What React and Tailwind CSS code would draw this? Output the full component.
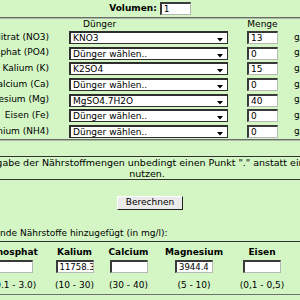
const rows = [
  { label: 'Nitrat (NO3)', duenger: 'KNO3', menge: '13' },
  { label: 'Phosphat (PO4)', duenger: 'Dünger wählen..', menge: '0' },
  { label: 'Kalium (K)', duenger: 'K2SO4', menge: '15' },
  { label: 'Calcium (Ca)', duenger: 'Dünger wählen..', menge: '0' },
  { label: 'Magnesium (Mg)', duenger: 'MgSO4.7H2O', menge: '40' },
  { label: 'Eisen (Fe)', duenger: 'Dünger wählen..', menge: '0' },
  { label: 'Ammonium (NH4)', duenger: 'Dünger wählen..', menge: '0' },
];

const results = [
  { name: 'Phosphat', value: '', range: '(0.1 - 3.0)', w: 'w-[60px]' },
  { name: 'Kalium', value: '11758.372', range: '(10 - 30)', w: 'w-[61px]' },
  { name: 'Calcium', value: '', range: '(30 - 40)', w: 'w-[47px]' },
  { name: 'Magnesium', value: '3944.4', range: '(5 - 10)', w: 'w-[84px]' },
  { name: 'Eisen', value: '', range: '(0,1 - 0,5)', w: 'w-[52px]' },
];

function TextBox({ value, className = '' }) {
  return (
    <div
      className={`h-[13px] bg-white border-t-2 border-l-2 border-r border-b border-t-[#3a3a3a] border-l-[#3a3a3a] border-r-[#b8b8b8] border-b-[#b8b8b8] pl-[2px] leading-[10px] overflow-hidden whitespace-nowrap ${className}`}
    >
      {value}
    </div>
  );
}

function Select({ value }) {
  return (
    <div className="w-[159px] h-[13px] bg-white border-t-2 border-l-2 border-r border-b border-[#2e2e2e] flex items-center pl-[2px] pr-[4px]">
      <span className="flex-1 leading-[10px] whitespace-nowrap">{value}</span>
      <svg width="6" height="4" viewBox="0 0 6 4" className="mt-[4px]">
        <path d="M0 0h6L3 3.5z" fill="#000" />
      </svg>
    </div>
  );
}

function Rule() {
  return <div className="border-t border-b border-t-[#6b6b6b] border-b-[#a9b9a2]" />;
}

export default function App() {
  return (
    <div className="w-[300px] h-[300px] overflow-hidden bg-[#d3f6c4] text-black text-[9px] font-['DejaVu_Sans',Verdana,sans-serif]">
      <div className="w-[420px] ml-[-60px]">
        {/* Volumen */}
        <div className="h-[17px] pt-[2px] flex justify-center items-start gap-[3px]">
          <span className="font-bold leading-[13px]">Volumen:</span>
          <TextBox value="1" className="w-[31px]" />
        </div>
        <Rule />

        {/* Dünger table */}
        <div className="flex h-[12px] items-center">
          <div className="w-[143px]" />
          <span className="w-[164px]">Dünger</span>
          <span className="w-[31px] text-center">Menge</span>
        </div>
        <div className="flex flex-col gap-[2.67px]">
          {rows.map((r) => (
            <div key={r.label} className="flex items-center h-[13px]">
              <span className="w-[109px] text-right whitespace-nowrap">{r.label}</span>
              <div className="ml-[20px]">
                <Select value={r.duenger} />
              </div>
              <TextBox value={r.menge} className="w-[31px] ml-[19px]" />
              <span className="ml-[16px]">g/l</span>
            </div>
          ))}
        </div>
        <div className="mt-[1px]">
          <Rule />
        </div>

        {/* Hinweis */}
        <div className="mt-[15px] border-t border-b border-[#333] pr-[6px] flex flex-col items-center text-[9.5px] leading-[11px] whitespace-nowrap">
          <div>Bitte bei der Eingabe der Nährstoffmengen unbedingt einen Punkt "." anstatt eines Kommas be</div>
          <div>nutzen.</div>
        </div>

        <div className="mt-[16px] flex justify-center">
          <button className="w-[66px] h-[14px] bg-[#ebebeb] border border-t-white border-l-white border-r-[#222] border-b-[#222] leading-[11px] text-[9px]">
            Berechnen
          </button>
        </div>

        <div className="mt-[17px] pl-[36px] leading-[12px]">Folgende Nährstoffe hinzugefügt (in mg/l):</div>

        {/* Ergebnis */}
        <div className="mt-[2px] border-t border-b border-t-[#333] border-b-[#707070] pt-[4px] pb-[3px] pl-[44px] flex">
          {results.map((c) => (
            <div key={c.name} className={`${c.w} flex flex-col items-center`}>
              <span className="font-bold leading-[12px]">{c.name}</span>
              <TextBox value={c.value} className="w-[38px] mt-[2px] text-[8.5px]" />
              <span className="mt-[6px] leading-[12px] whitespace-nowrap">{c.range}</span>
            </div>
          ))}
        </div>
      </div>
    </div>
  );
}
